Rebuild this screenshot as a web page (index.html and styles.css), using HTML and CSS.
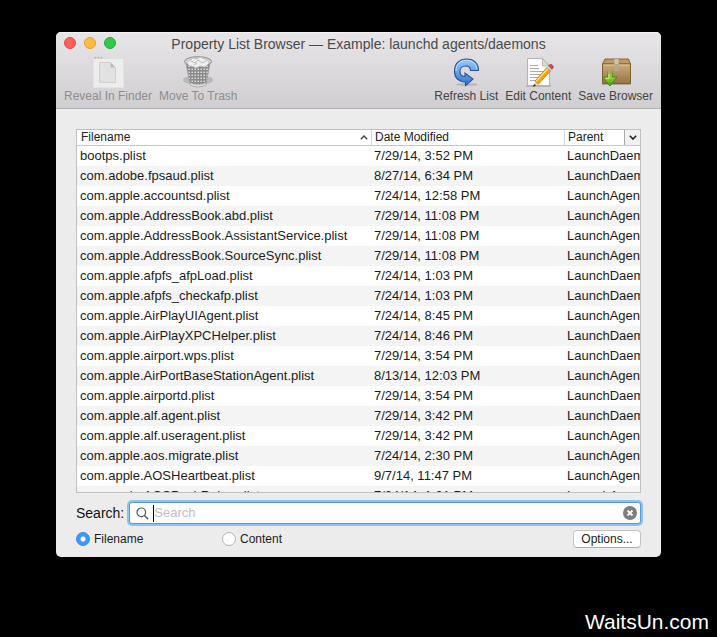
FILE: index.html
```html
<!DOCTYPE html>
<html lang="en">
<head>
<meta charset="utf-8">
<title>Property List Browser</title>
<link rel="stylesheet" href="styles.css">
</head>
<body>
<main class="window">
  <header class="chrome">
    <div class="titlebar">
      <div class="lights">
        <button class="light close" aria-label="Close"></button>
        <button class="light minimize" aria-label="Minimize"></button>
        <button class="light zoom" aria-label="Zoom"></button>
      </div>
      <h1 class="title">Property List Browser — Example: launchd agents/daemons</h1>
    </div>
    <div class="toolbar">
      <button class="tool" disabled>
        <svg class="icon" viewBox="0 0 32 32" aria-hidden="true">
          <rect x="1" y="0" width="31" height="32" fill="#ededed"/>
          <rect x="1" y="0" width="31" height="3" fill="#e0dfe0"/>
          <circle cx="3.500" cy="1.700" r="1" fill="#d9a9a4"/><circle cx="6.500" cy="1.700" r="1" fill="#cdb9a0"/><circle cx="9.500" cy="1.700" r="1" fill="#a8c6a4"/>
          <path d="M7.500 6.500h11l5 5v15h-16z" fill="#e2e2e2" stroke="#cfcfcf"/>
          <path d="M18.500 6.500v5h5z" fill="#bdbdbd"/>
          <path d="M1.500 3v28.500h30V3" fill="none" stroke="#e4e3e4"/>
        </svg>
        <span>Reveal In Finder</span>
      </button>
      <button class="tool" disabled>
        <svg class="icon" viewBox="0 0 32 32" aria-hidden="true">
          <defs>
            <pattern id="mesh" width="3" height="3" patternUnits="userSpaceOnUse">
              <rect width="3" height="3" fill="#8a8a8a"/><rect x=".4" y=".6" width="1.600" height="1.400" fill="#dcdcdc"/>
            </pattern>
          </defs>
          <ellipse cx="16" cy="24" rx="15" ry="5" fill="#bbb8bb"/>
          <path d="M3.500 5l4.500 23q8 5 16 0L28.500 5z" fill="url(#mesh)" stroke="#a2a2a2"/>
          <path d="M7.500 26.500l.5 2.500q8 4 16 0l.5-2.500q-8 4-17 0z" fill="#dedede" stroke="#9b9b9b" stroke-width=".6"/>
          <ellipse cx="16" cy="5.500" rx="13.500" ry="4.800" fill="#d2d2d2" stroke="#8f8f8f"/>
          <path d="M5 6l4-2 2-2 4 1 3-2 4 2 4 2 1 2-4 4-5-1-4 2-4-2-3 0z" fill="#efefef" stroke="#bcbcbc" stroke-width=".7"/>
          <path d="M9 5l4 2 3-3 4 3 4-2M12 9l3-2" fill="none" stroke="#bbb"/>
        </svg>
        <span>Move To Trash</span>
      </button>
      <span class="spacer"></span>
      <button class="tool">
        <svg class="icon" viewBox="0 0 32 32" aria-hidden="true">
          <defs><linearGradient id="blue" x2="0" y2="1"><stop stop-color="#9ccdf8"/><stop offset="1" stop-color="#2d74d2"/></linearGradient></defs>
          <ellipse cx="17" cy="28.500" rx="11" ry="1.500" fill="#b6b5b8"/>
          <path d="M28.500 14.500H20.500C20.500 11.500 18.500 10 15.500 10C12 10 10 12.500 10 15.500C10 18.500 12 20.500 15 20.500V17L23 23L15.500 29.500V26C8.500 25.500 4.500 21.500 4.500 15C4.500 7.500 9.500 3 16.500 3C24 3 28.500 7.500 28.500 14.500Z" fill="url(#blue)" stroke="#26549b" stroke-width="1.100"/>
          <path d="M6 15C6 8 10.500 4.500 16.500 4.500C22.500 4.500 26 7.500 27 13" fill="none" stroke="#bde0ff" stroke-width="1"/>
        </svg>
        <span>Refresh List</span>
      </button>
      <button class="tool">
        <svg class="icon" viewBox="0 0 32 32" aria-hidden="true">
          <path d="M4 30h25" stroke="#aaa" stroke-width="1.500"/>
          <path d="M5.500 2.500h15l7 7.500v19.500h-22z" fill="#fcfcfc" stroke="#b4b4b4"/>
          <path d="M20.500 2.500v7.500h7z" fill="#dadada" stroke="#a9a9a9" stroke-width=".7"/>
          <path d="M8 9.500h8m-8 3h9m-9 3h14m-14 3h12m-12 3h10m-10 3h7" stroke="#aaa"/>
          <path d="M11.500 30.500l2-6 3.500 4z" fill="#f2cf94"/>
          <path d="M11 31l1-3 2 1.500z" fill="#222"/>
          <path d="M13 25l12-13.500 3.500 3.500-12 13z" fill="#f2a313" stroke="#b97013" stroke-width=".7"/>
          <path d="M14 25.500L26 12.500" stroke="#ffdd65" stroke-width="1.400"/>
          <path d="M25 11.500l1.500-1.700 3.500 3.500-1.500 1.700z" fill="#ccd3db" stroke="#888" stroke-width=".4"/>
          <path d="M26.500 9.800l1-1.100q1.500-1 3 .5t.5 3l-1 1.100z" fill="#d9444c" stroke="#a72d35" stroke-width=".5"/>
        </svg>
        <span>Edit Content</span>
      </button>
      <button class="tool">
        <svg class="icon" viewBox="0 0 32 32" aria-hidden="true">
          <defs>
            <linearGradient id="box" x2="0" y2="1"><stop stop-color="#c9ac7c"/><stop offset="1" stop-color="#987345"/></linearGradient>
            <linearGradient id="green" x2="0" y2="1"><stop stop-color="#8fc93a" stop-opacity="0"/><stop offset=".5" stop-color="#8fcf35"/><stop offset="1" stop-color="#499712"/></linearGradient>
            <linearGradient id="edge" x2="0" y2="1"><stop stop-color="#478811" stop-opacity="0"/><stop offset=".5" stop-color="#478811"/></linearGradient>
          </defs>
          <path d="M2 28h29" stroke="#aaa6a1" stroke-width="2"/>
          <path d="M5 3h23.500l2 5h-28z" fill="#c09a61" stroke="#8a6637"/>
          <path d="M2.500 8h28v19.500h-28z" fill="url(#box)" stroke="#80602f"/>
          <path d="M3.500 9h26" stroke="#dfc79d"/>
          <path d="M14.500 3h4v12h-4z" fill="#b5a893"/><path d="M14.500 3h4v5h-4z" fill="#d0c3ad"/>
          <path d="M7.500 13h5v8h4.500L10 30 2.500 21h5z" fill="url(#green)" stroke="url(#edge)"/>
          <path d="M9 18v4.500H6" fill="none" stroke="#c8f08a"/>
        </svg>
        <span>Save Browser</span>
      </button>
    </div>
  </header>
  <section class="content">
    <div class="list">
      <table class="files">
        <colgroup><col><col class="col-date"><col class="col-parent"></colgroup>
        <thead>
          <tr>
            <th scope="col"><div class="head">Filename<svg class="sort" viewBox="0 0 8 5" aria-hidden="true"><path d="M.8 4.300L4 1l3.200 3.300" fill="none" stroke="#444" stroke-width="1.400"/></svg></div></th>
            <th scope="col"><div class="head">Date Modified</div></th>
            <th scope="col"><div class="head">Parent<button class="columns" aria-label="Choose columns"><svg class="sort" viewBox="0 0 8 5" aria-hidden="true"><path d="M.8.700L4 4 7.200.700" fill="none" stroke="#222" stroke-width="1.600"/></svg></button></div></th>
          </tr>
        </thead>
        <tbody>
          <tr><td>bootps.plist</td><td>7/29/14, 3:52 PM</td><td>LaunchDaemons</td></tr>
          <tr><td>com.adobe.fpsaud.plist</td><td>8/27/14, 6:34 PM</td><td>LaunchDaemons</td></tr>
          <tr><td>com.apple.accountsd.plist</td><td>7/24/14, 12:58 PM</td><td>LaunchAgents</td></tr>
          <tr><td>com.apple.AddressBook.abd.plist</td><td>7/29/14, 11:08 PM</td><td>LaunchAgents</td></tr>
          <tr><td>com.apple.AddressBook.AssistantService.plist</td><td>7/29/14, 11:08 PM</td><td>LaunchAgents</td></tr>
          <tr><td>com.apple.AddressBook.SourceSync.plist</td><td>7/29/14, 11:08 PM</td><td>LaunchAgents</td></tr>
          <tr><td>com.apple.afpfs_afpLoad.plist</td><td>7/24/14, 1:03 PM</td><td>LaunchDaemons</td></tr>
          <tr><td>com.apple.afpfs_checkafp.plist</td><td>7/24/14, 1:03 PM</td><td>LaunchDaemons</td></tr>
          <tr><td>com.apple.AirPlayUIAgent.plist</td><td>7/24/14, 8:45 PM</td><td>LaunchAgents</td></tr>
          <tr><td>com.apple.AirPlayXPCHelper.plist</td><td>7/24/14, 8:46 PM</td><td>LaunchDaemons</td></tr>
          <tr><td>com.apple.airport.wps.plist</td><td>7/29/14, 3:54 PM</td><td>LaunchDaemons</td></tr>
          <tr><td>com.apple.AirPortBaseStationAgent.plist</td><td>8/13/14, 12:03 PM</td><td>LaunchAgents</td></tr>
          <tr><td>com.apple.airportd.plist</td><td>7/29/14, 3:54 PM</td><td>LaunchDaemons</td></tr>
          <tr><td>com.apple.alf.agent.plist</td><td>7/29/14, 3:42 PM</td><td>LaunchDaemons</td></tr>
          <tr><td>com.apple.alf.useragent.plist</td><td>7/29/14, 3:42 PM</td><td>LaunchAgents</td></tr>
          <tr><td>com.apple.aos.migrate.plist</td><td>7/24/14, 2:30 PM</td><td>LaunchAgents</td></tr>
          <tr><td>com.apple.AOSHeartbeat.plist</td><td>9/7/14, 11:47 PM</td><td>LaunchAgents</td></tr>
          <tr><td>com.apple.AOSPushRelay.plist</td><td>7/24/14, 1:31 PM</td><td>LaunchAgents</td></tr>
        </tbody>
      </table>
    </div>
    <div class="search">
      <label for="query">Search:</label>
      <div class="field">
        <svg class="lens" viewBox="0 0 13 13" aria-hidden="true"><circle cx="5.300" cy="5.300" r="4.300" fill="none" stroke="#555" stroke-width="1.200"/><path d="M8.400 8.400l3.800 3.800" stroke="#555" stroke-width="1.400"/></svg>
        <span class="caret"></span>
        <input id="query" type="text" placeholder="Search">
        <button class="clear" aria-label="Clear search"><svg viewBox="0 0 14 14" aria-hidden="true"><circle cx="7" cy="7" r="7" fill="#7d7d7d"/><path d="M4.500 4.500l5 5m0-5l-5 5" stroke="#fff" stroke-width="1.800"/></svg></button>
      </div>
    </div>
    <div class="options">
      <label class="choice"><input type="radio" name="scope" checked>Filename</label>
      <label class="choice"><input type="radio" name="scope">Content</label>
      <button class="push">Options...</button>
    </div>
  </section>
</main>
<footer class="credit">WaitsUn.com</footer>
</body>
</html>
```
FILE: styles.css
```css
* { box-sizing: border-box; }

body {
  margin: 0;
  height: 100vh;
  padding: 32px 56px 0;
  display: flex;
  flex-direction: column;
  background: #000;
  color: #1c1c1c;
  font: 13px/20px "Liberation Sans", Arial, sans-serif;
}

button {
  padding: 0;
  border: 0;
  background: none;
  color: inherit;
  font: inherit;
}

svg { display: block; }

.window {
  flex: 1;
  min-height: 0;
  display: flex;
  flex-direction: column;
  border-radius: 5px;
  overflow: hidden;
  background: #ececec;
}

.chrome {
  padding: 1px 8px 4px;
  border-top: 1px solid #f5f4f5;
  border-bottom: 1px solid #b1b0b1;
  background: linear-gradient(#e7e5e7, #d0ced0);
}

.titlebar {
  display: grid;
  grid-template-columns: 1fr auto 1fr;
  align-items: start;
}

.lights {
  display: flex;
  gap: 8px;
  padding-top: 3px;
}

.light {
  width: 12px;
  height: 12px;
  border-radius: 50%;
  border: 1px solid;
}

.close { background: #fc605b; border-color: #e04a46; }
.minimize { background: #fdbc40; border-color: #dfa033; }
.zoom { background: #34c749; border-color: #27a836; }

.title {
  margin: 0;
  color: #4b4a4b;
  font-size: 14px;
  font-weight: normal;
  white-space: nowrap;
}

.toolbar {
  display: flex;
  gap: 7px;
  margin-top: 2px;
  color: #454445;
  font-size: 12px;
  line-height: 16px;
}

.tool {
  display: flex;
  flex-direction: column;
  align-items: center;
  white-space: nowrap;
}

.tool:disabled { color: #8f8d8f; }

.icon {
  width: 32px;
  height: 32px;
}

.spacer { flex: 1; }

.content {
  flex: 1;
  min-height: 0;
  display: flex;
  flex-direction: column;
  padding: 20px 20px 8px;
}

.list {
  flex: 1;
  min-height: 0;
  overflow: hidden;
  border: 1px solid #c0c0c0;
  background: #fff;
}

.files {
  width: 100%;
  table-layout: fixed;
  border-collapse: separate;
  border-spacing: 0;
}

.col-date { width: 193px; }
.col-parent { width: 76px; }

th {
  padding: 0;
  border-bottom: 1px solid #c8c8c8;
  color: #222;
  font-size: 12px;
  font-weight: normal;
  line-height: 15px;
}

.head {
  display: flex;
  align-items: center;
  justify-content: space-between;
  height: 15px;
  padding-left: 4px;
}

th + th .head {
  padding-left: 3px;
  border-left: 1px solid #d5d5d5;
}

.sort {
  width: 8px;
  height: 5px;
  margin-right: 3px;
}

.columns {
  display: flex;
  align-items: center;
  justify-content: center;
  width: 16px;
  height: 15px;
  border-left: 1px solid #aaa;
  background: #f1f1f1;
}

.columns .sort { margin: 0; }

td {
  height: 20px;
  padding: 0 0 0 3px;
  overflow: hidden;
  white-space: nowrap;
}

tbody tr:nth-child(even) { background: #f4f4f4; }

.search {
  display: flex;
  align-items: center;
  gap: 5px;
  margin-top: 9px;
  color: #111;
  font-size: 14px;
}

.field {
  flex: 1;
  display: flex;
  align-items: center;
  height: 22px;
  padding: 0 3px 0 6px;
  border: 1px solid #5b97d0;
  border-radius: 3px;
  background: #fff;
  box-shadow: 0 0 0 2px #8fc1f2;
  font-size: 13px;
}

.lens {
  width: 13px;
  height: 13px;
}

.caret {
  width: 1px;
  height: 17px;
  margin-left: 4px;
  background: #000;
}

.field input {
  flex: 1;
  min-width: 0;
  padding: 0;
  border: 0;
  outline: 0;
  background: none;
  font: inherit;
}

.field input::placeholder { color: #bebebe; }

.clear svg {
  width: 14px;
  height: 14px;
}

.options {
  display: flex;
  align-items: center;
  margin-top: 5px;
  font-size: 12px;
}

.choice {
  display: flex;
  align-items: center;
  gap: 4px;
  width: 146px;
}

.choice input {
  appearance: none;
  width: 14px;
  height: 14px;
  margin: 0;
  border: 1px solid #b4b4b4;
  border-radius: 50%;
  background: #fff;
}

.choice input:checked {
  border-color: #2f8ceb;
  background: radial-gradient(circle, #fff 2px, #3b99fc 3px);
}

.push {
  width: 68px;
  height: 18px;
  margin-left: auto;
  border: 1px solid #c3c3c3;
  border-bottom-color: #acacac;
  border-radius: 4px;
  background: #fff;
  line-height: 14px;
}

.credit {
  height: 80px;
  margin-right: -48px;
  padding-top: 52px;
  color: #fff;
  font-size: 21px;
  line-height: 26px;
  text-align: right;
}
```
